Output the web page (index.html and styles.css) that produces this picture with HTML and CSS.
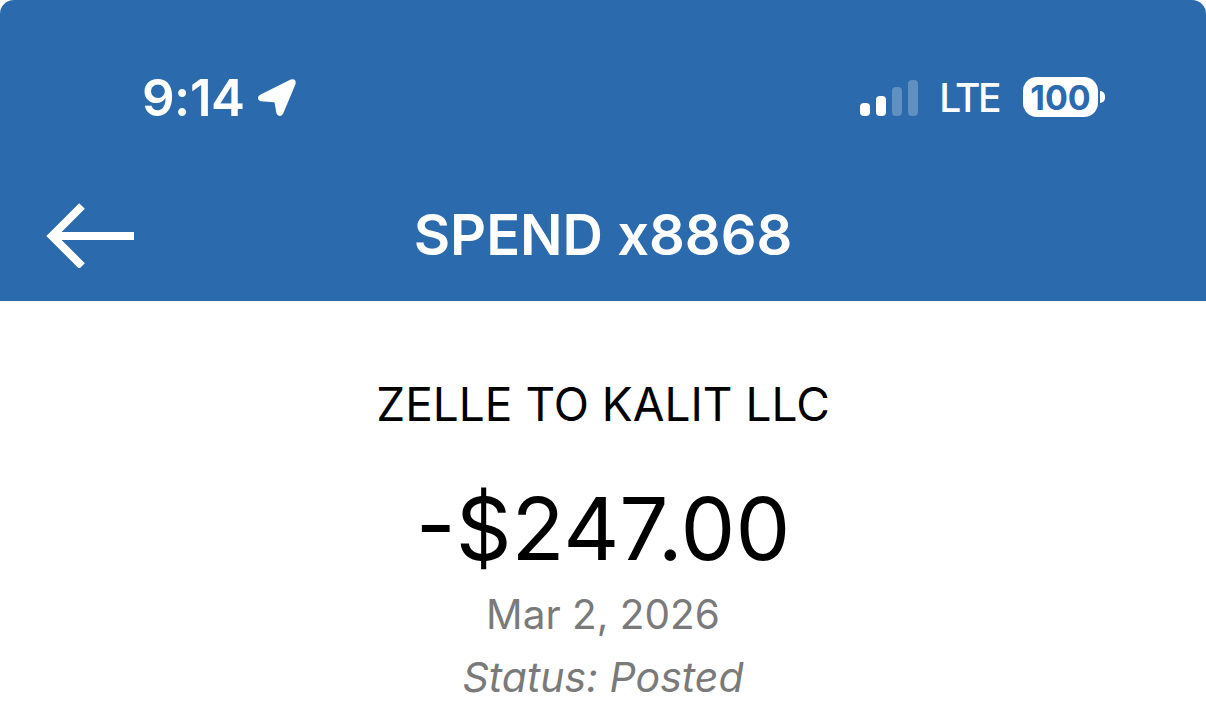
FILE: index.html
```html
<!DOCTYPE html>
<html lang="en">
<head>
    <meta charset="UTF-8">
    <meta name="viewport" content="width=device-width, initial-scale=1.0">
    <title>Transaction</title>
    <link rel="stylesheet" href="styles.css">
</head>
<body>
    <header class="header">
        <div class="status-bar">
            <div class="status-left">
                <span class="time">9:14</span>
                <svg class="location" width="40" height="40" viewBox="0 0 42 42">
                    <path d="M36 4 L4 20 Q1 22 4 24 L18 25 Q20 25 20 27 L22 38 Q24 41 26 38 L39 7 Q40 3 36 4 Z" fill="#fff" stroke="#fff" stroke-width="3" stroke-linejoin="round"/>
                </svg>
            </div>
            <div class="status-right">
                <div class="signal">
                    <span class="bar bar-1"></span>
                    <span class="bar bar-2"></span>
                    <span class="bar bar-3 dim"></span>
                    <span class="bar bar-4 dim"></span>
                </div>
                <span class="network">LTE</span>
                <div class="battery">
                    <span class="battery-level">100</span>
                    <span class="battery-cap"></span>
                </div>
            </div>
        </div>
        <div class="nav-bar">
            <svg class="back" width="92" height="66" viewBox="0 0 92 66">
                <path d="M38 4 L8 34 L38 64 M8 34 H90" fill="none" stroke="#fff" stroke-width="8"/>
            </svg>
            <h1 class="title">SPEND x8868</h1>
        </div>
    </header>
    <main class="details">
        <div class="merchant">ZELLE TO KALIT LLC</div>
        <div class="amount">-$247.00</div>
        <div class="date">Mar 2, 2026</div>
        <div class="status">Status: Posted</div>
    </main>
</body>
</html>
```

FILE: styles.css
```css
html, body {
    margin: 0;
    padding: 0;
    overflow: hidden;
}
body {
    font-family: Inter, "Liberation Sans", sans-serif;
    background: #fff;
    height: 724px;
}
.header {
    height: 301px;
    box-sizing: border-box;
    background: #2b6aad;
    border-radius: 14px 14px 0 0;
    color: #fff;
    display: flex;
    flex-direction: column;
}
.status-bar {
    display: flex;
    justify-content: space-between;
    align-items: center;
    padding: 72px 101px 0 142px;
    height: 50px;
}
.status-left {
    display: flex;
    align-items: center;
    gap: 13px;
}
.time {
    font-size: 51px;
    font-weight: 600;
    letter-spacing: -0.5px;
}
.status-right {
    display: flex;
    align-items: center;
}
.signal {
    display: flex;
    align-items: flex-end;
    gap: 6px;
    height: 36px;
    margin-top: 1px;
    margin-right: 21px;
}
.bar {
    width: 10px;
    border-radius: 4px;
    background: #fff;
}
.bar-1 { height: 13px; }
.bar-2 { height: 20px; }
.bar-3 { height: 29px; }
.bar-4 { height: 36px; }
.bar.dim {
    background: rgba(255, 255, 255, 0.25);
}
.network {
    font-size: 39px;
    font-weight: 500;
    letter-spacing: -2.5px;
    margin-right: 24px;
}
.battery {
    display: flex;
    align-items: center;
}
.battery-level {
    width: 75px;
    height: 40px;
    line-height: 41px;
    border-radius: 14px;
    background: #fff;
    color: #2b6aad;
    text-align: center;
    font-size: 34px;
    font-weight: 700;
}
.battery-cap {
    width: 5px;
    height: 12px;
    margin-left: 2px;
    background: #fff;
    border-radius: 0 6px 6px 0;
}
.nav-bar {
    position: relative;
    display: flex;
    justify-content: center;
    align-items: center;
    margin-top: 90px;
}
.back {
    position: absolute;
    left: 44px;
    top: -10px;
}
.title {
    margin: 0;
    font-size: 56px;
    font-weight: 600;
    line-height: 46px;
}
.details {
    display: flex;
    flex-direction: column;
    align-items: center;
}
.merchant {
    margin-top: 76px;
    font-size: 46px;
    line-height: 54px;
    color: #000;
}
.amount {
    margin-top: 48px;
    font-size: 87px;
    line-height: 100px;
    color: #000;
}
.date {
    margin-top: 12px;
    font-size: 40.500px;
    line-height: 48px;
    color: #7a7a7a;
}
.status {
    margin-top: 14px;
    font-size: 41px;
    line-height: 48px;
    font-style: italic;
    color: #7a7a7a;
}
```
